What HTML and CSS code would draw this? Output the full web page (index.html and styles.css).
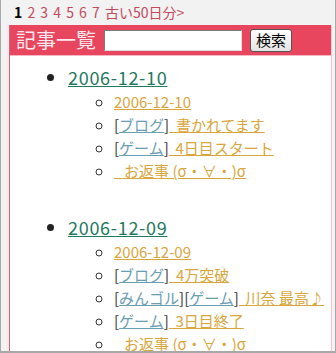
FILE: index.html
```html
<!doctype html>
<html>
  <head>
    <meta charset="utf-8">
    <title>記事一覧</title>
    <meta name="viewport" content="width=device-width">
    <link rel="stylesheet" href="styles.css">
  </head>
  <body>
    <div class="page">
      <div class="pager">
        <strong>1</strong> <a href="#">2</a> <a href="#">3</a> <a href="#">4</a> <a href="#">5</a> <a href="#">6</a> <a href="#">7</a> <a href="#">古い50日分&gt;</a>
      </div>

      <div class="main">
        <form class="head">
          <h1 class="title">記事一覧</h1>
          <input class="word" type="text">
          <button class="search" type="button">検索</button>
        </form>

        <ul class="days">
          <li>
            <a class="day" href="#">2006-12-10</a>
            <ul class="entries">
              <li><a href="#">2006-12-10</a></li>
              <li>[<a class="cat" href="#">ブログ</a>]<a href="#">&nbsp;&nbsp;書かれてます</a></li>
              <li>[<a class="cat" href="#">ゲーム</a>]<a href="#">&nbsp;&nbsp;4日目スタート</a></li>
              <li><a href="#">&nbsp;&nbsp;&nbsp;お返事 (σ・∀・)σ</a></li>
            </ul>
          </li>
          <li>
            <a class="day" href="#">2006-12-09</a>
            <ul class="entries">
              <li><a href="#">2006-12-09</a></li>
              <li>[<a class="cat" href="#">ブログ</a>]<a href="#">&nbsp;&nbsp;4万突破</a></li>
              <li>[<a class="cat" href="#">みんゴル</a>][<a class="cat" href="#">ゲーム</a>]<a href="#">&nbsp;&nbsp;川奈 最高♪</a></li>
              <li>[<a class="cat" href="#">ゲーム</a>]<a href="#">&nbsp;&nbsp;3日目終了</a></li>
              <li><a href="#">&nbsp;&nbsp;&nbsp;お返事 (σ・∀・)σ</a></li>
            </ul>
          </li>
        </ul>
      </div>
    </div>
  </body>
</html>
```

FILE: styles.css
```css
html, body {
	margin: 0;
	padding: 0;
}
body {
	font-family: "Noto Sans CJK JP", "DejaVu Sans", sans-serif;
	color: #333;
	background: #f2f2f2;
}
.page {
	height: 353px;
	box-sizing: border-box;
	border: 1px solid #a8a8a8;
	border-top: 0;
	border-bottom-width: 2px;
	padding: 3px 3px 0 8px;
	overflow: hidden;
}
.pager {
	font-size: 14px;
	line-height: 18px;
	padding-left: 5px;
	margin-bottom: 4px;
	white-space: nowrap;
	word-spacing: 2px;
}
.pager strong {
	color: #000;
}
.pager a {
	color: #c24a5c;
	text-decoration: none;
}
.main {
	height: 400px;
	background: #fff;
	border-left: 1px solid #c8687a;
	border-right: 1px solid #f0c8d0;
	box-shadow: -2px 0 0 #fde6ec, 2px 0 0 #fdeef2;
	overflow: hidden;
}
.head {
	display: flex;
	align-items: center;
	height: 30px;
	margin: 0;
	padding: 0 6px;
	background: #e8465e;
	border-bottom: 1px solid #f4b8c4;
}
.title {
	margin: 0 8px 0 0;
	font-size: 20px;
	font-weight: normal;
	color: #fde8ee;
	line-height: 30px;
}
.word {
	width: 138px;
	height: 21px;
	box-sizing: border-box;
	margin: 0 8px 0 0;
	border: 1px solid #7a7a7a;
	border-right-color: #ddd;
	border-bottom-color: #ddd;
	background: #fff;
}
.search {
	height: 23px;
	padding: 0 5px;
	font-family: inherit;
	font-size: 15px;
	line-height: 20px;
	color: #000;
	border: 1px solid #555;
	border-radius: 3px;
	background: linear-gradient(#fdfdfd, #e4e4e4);
}
.days {
	list-style: disc;
	margin: 8px 0 0;
	padding-left: 58px;
}
.days > li {
	margin-bottom: 32px;
	font-size: 18px;
	line-height: 26px;
	color: #222;
}
.day {
	color: #1f7a60;
	letter-spacing: 0.7px;
}
.entries {
	list-style: circle;
	margin: 0;
	padding-left: 46px;
}
.entries li {
	font-size: 15px;
	line-height: 23px;
	white-space: nowrap;
	color: #333;
}
.entries a {
	color: #d8a63c;
}
.entries a.cat {
	color: #6a9eb2;
}
```
